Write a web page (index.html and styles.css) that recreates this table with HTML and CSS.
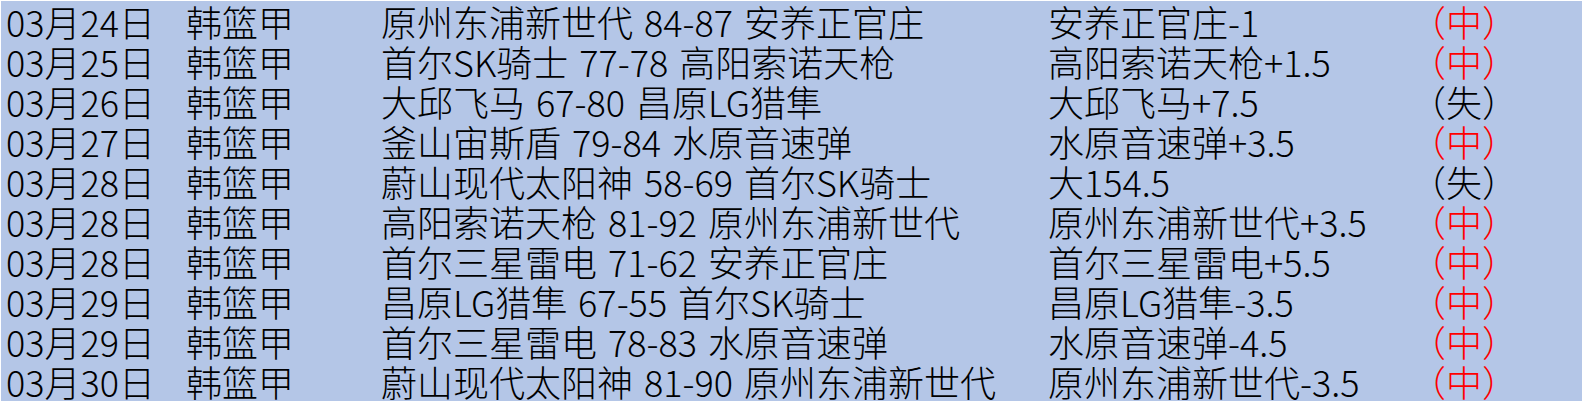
FILE: index.html
```html
<!DOCTYPE html>
<html lang="zh-CN">
<head>
<meta charset="utf-8">
<title>韩篮甲</title>
<link rel="stylesheet" href="styles.css">
</head>
<body>
<div class="sheet">
  <div class="row"><span>03月24日</span><span>韩篮甲</span><span class="match">原州东浦新世代 84-87 安养正官庄</span><span>安养正官庄-1</span><span class="win">（中）</span></div>
  <div class="row"><span>03月25日</span><span>韩篮甲</span><span class="match">首尔SK骑士 77-78 高阳索诺天枪</span><span>高阳索诺天枪+1.5</span><span class="win">（中）</span></div>
  <div class="row"><span>03月26日</span><span>韩篮甲</span><span class="match">大邱飞马 67-80 昌原LG猎隼</span><span>大邱飞马+7.5</span><span class="lose">（失）</span></div>
  <div class="row"><span>03月27日</span><span>韩篮甲</span><span class="match">釜山宙斯盾 79-84 水原音速弹</span><span>水原音速弹+3.5</span><span class="win">（中）</span></div>
  <div class="row"><span>03月28日</span><span>韩篮甲</span><span class="match">蔚山现代太阳神 58-69 首尔SK骑士</span><span>大154.5</span><span class="lose">（失）</span></div>
  <div class="row"><span>03月28日</span><span>韩篮甲</span><span class="match">高阳索诺天枪 81-92 原州东浦新世代</span><span>原州东浦新世代+3.5</span><span class="win">（中）</span></div>
  <div class="row"><span>03月28日</span><span>韩篮甲</span><span class="match">首尔三星雷电 71-62 安养正官庄</span><span>首尔三星雷电+5.5</span><span class="win">（中）</span></div>
  <div class="row"><span>03月29日</span><span>韩篮甲</span><span class="match">昌原LG猎隼 67-55 首尔SK骑士</span><span>昌原LG猎隼-3.5</span><span class="win">（中）</span></div>
  <div class="row"><span>03月29日</span><span>韩篮甲</span><span class="match">首尔三星雷电 78-83 水原音速弹</span><span>水原音速弹-4.5</span><span class="win">（中）</span></div>
  <div class="row"><span>03月30日</span><span>韩篮甲</span><span class="match">蔚山现代太阳神 81-90 原州东浦新世代</span><span>原州东浦新世代-3.5</span><span class="win">（中）</span></div>
</div>
</body>
</html>
```
FILE: styles.css
```css
html, body {
  margin: 0;
  padding: 0;
  background: #ffffff;
}
.sheet {
  margin: 1px 0 0 1px;
  background: #b4c6e7;
  font-family: "Noto Sans CJK SC", "Noto Sans", sans-serif;
  font-size: 36px;
  font-weight: 300;
  color: #000000;
}
.row {
  display: grid;
  grid-template-columns: 180px 195px 667px 362px 1fr;
  height: 40px;
  line-height: 40px;
  white-space: nowrap;
}
.row span {
  padding-left: 5px;
}
.match {
  word-spacing: 3px;
}
.win {
  color: #ff0000;
}
.lose {
  color: #000000;
}
```
